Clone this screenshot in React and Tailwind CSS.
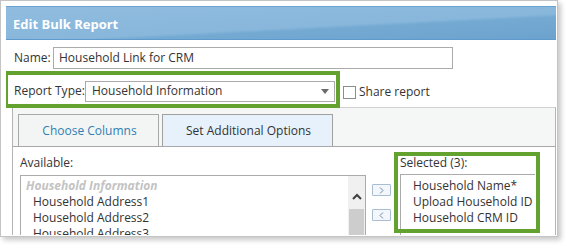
export default function App() {
  return (
    <div className="w-[568px] h-[248px] bg-white font-['Open_Sans','Noto_Sans',sans-serif] text-[12px] text-[#333]">
      <div className="w-[558px] h-[237px] border border-[#c4c4c4] bg-white shadow-[3px_3px_5px_rgba(0,0,0,0.22)] pl-[5px] pr-[1px] pt-[5px] pb-[1px]">
        <div className="h-full overflow-hidden flex flex-col">
          {/* Header */}
          <div className="h-[34px] shrink-0 border-t border-[#6aa3d1] border-b border-b-[#5e9acb] bg-[linear-gradient(177deg,#90bcdf_0%,#88b7db_58%,#74a9d2_64%,#6ca3ce_100%)] flex items-center pl-[7px] pt-[2px]">
            <span className="text-white font-bold text-[13px] leading-none">Edit Bulk Report</span>
          </div>

          {/* Name row */}
          <div className="mt-[7px] h-[22px] flex items-center pl-[8px] shrink-0">
            <span className="w-[39px] leading-none">Name:</span>
            <div className="w-[400px] h-[22px] border border-[#ababab] flex items-center pl-[5px] leading-none">
              Household Link for CRM
            </div>
          </div>

          {/* Report type row */}
          <div className="relative z-10 mt-[2px] -ml-[2px] flex items-center shrink-0">
            <div className="w-[336px] h-[37px] border-4 border-[#63a22f] flex items-center pl-[6px] pt-[3px]">
              <span className="w-[71px] leading-none">Report Type:</span>
              <div className="w-[250px] h-[21px] border border-[#ababab] flex items-center justify-between pl-[6px] pr-[5px] leading-none">
                <span>Household Information</span>
                <svg width="8" height="5" viewBox="0 0 8 5">
                  <path d="M0 0h8L4 5z" fill="#6b6b6b" />
                </svg>
              </div>
            </div>
            <div className="ml-[3px] mt-[5px] w-[13px] h-[13px] border border-[#8c8c8c] bg-white" />
            <span className="ml-[3px] mt-[4px] leading-none">Share report</span>
          </div>

          {/* Tab control */}
          <div className="-mt-[1px] ml-[6px] w-[544px] flex-1 flex flex-col border-t border-l border-r border-[#d2d2d2] border-l-[#b4b4b4] border-r-[#b4b4b4] bg-[#f5f6f6]">
            <div className="flex pt-[6px] pl-[5px] shrink-0">
              <div className="w-[141px] h-[32px] border border-b-0 border-[#a8a8a8] bg-[#f3f5f5] flex items-center justify-center text-[#2f7fb2] leading-none pl-[2px]">
                Choose Columns
              </div>
              <div className="ml-[3px] w-[171px] h-[32px] border border-b-0 border-[#a0a0a0] bg-[#e6f1fb] flex items-center justify-center leading-none pl-[2px]">
                Set Additional Options
              </div>
            </div>

            {/* Panel */}
            <div className="relative flex-1 border-t border-[#a8a8a8] bg-white flex pl-[7px] pt-[8px]">
              {/* Available column */}
              <div className="w-[346px] flex flex-col">
                <div className="h-[16px] leading-[16px]">Available:</div>
                <div className="mt-[4px] flex-1 border border-[#ababab] flex">
                  <div className="flex-1 pt-[2px] leading-[16px]">
                    <div className="pl-[5px] italic font-bold text-[#c3c3c3]">Household Information</div>
                    <div className="pl-[12px]">Household Address1</div>
                    <div className="pl-[12px]">Household Address2</div>
                    <div className="pl-[12px]">Household Address3</div>
                  </div>
                  <div className="w-[17px] bg-[#f0f0f0] flex flex-col">
                    <div className="h-[33px] flex items-center justify-center pt-[8px]">
                      <svg width="10" height="7" viewBox="0 0 10 7">
                        <path d="M1 6L5 2l4 4" fill="none" stroke="#404040" strokeWidth="2" />
                      </svg>
                    </div>
                    <div className="flex-1 mx-[1px] bg-[#cdcdcd]" />
                  </div>
                </div>
              </div>

              {/* Buttons */}
              <div className="ml-[6px] w-[19px] flex flex-col">
                <div className="mt-[29px] h-[12px] border border-[#a9bdd2] bg-[#f3f7fb] rounded-[1px] flex items-center justify-center">
                  <svg width="5" height="7" viewBox="0 0 5 7">
                    <path d="M1 0.5L4 3.5 1 6.5" fill="none" stroke="#6a8bab" strokeWidth="1" />
                  </svg>
                </div>
                <div className="mt-[13px] h-[12px] border border-[#a9bdd2] bg-[#f3f7fb] rounded-[1px] flex items-center justify-center">
                  <svg width="5" height="7" viewBox="0 0 5 7">
                    <path d="M4 0.5L1 3.5 4 6.5" fill="none" stroke="#6a8bab" strokeWidth="1" />
                  </svg>
                </div>
              </div>

              {/* Selected column */}
              <div className="ml-[9px] w-[135px] flex flex-col">
                <div className="h-[16px] leading-[16px]">Selected (3):</div>
                <div className="mt-[3px] flex-1 border-l border-t border-[#ababab] pt-[3px] leading-[16px] pl-[12px]">
                  <div>Household Name*</div>
                  <div>Upload Household ID</div>
                  <div>Household CRM ID</div>
                </div>
              </div>

              {/* Green annotation */}
              <div className="absolute left-[381px] top-[5px] w-[146px] h-[81px] border-4 border-[#63a22f] pointer-events-none" />
            </div>
          </div>
        </div>
      </div>
    </div>
  );
}
